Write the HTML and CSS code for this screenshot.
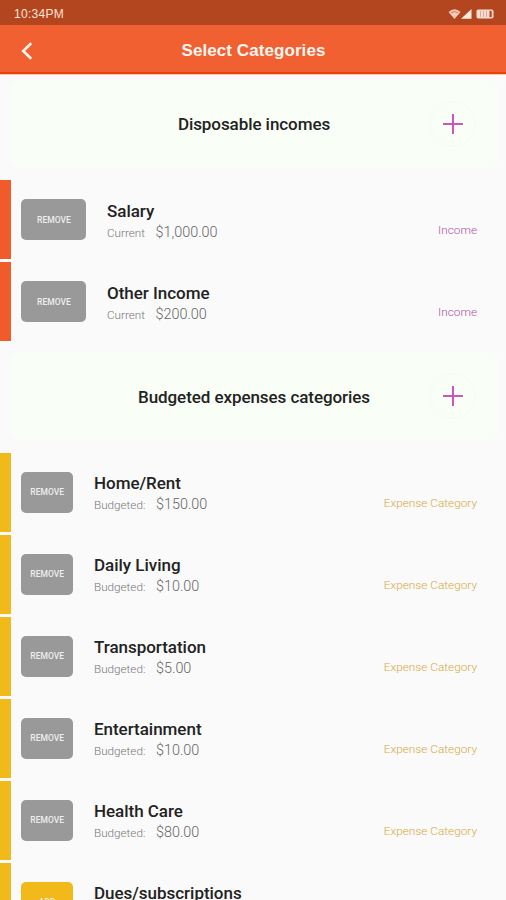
FILE: index.html
```html
<!DOCTYPE html>
<html lang="en">
<head>
<meta charset="utf-8">
<title>Select Categories</title>
<link rel="stylesheet" href="styles.css">
</head>
<body>
<div class="status">
  <span class="time">10:34PM</span>
  <svg class="indicators" width="48" height="12" viewBox="0 0 48 12">
    <path d="M.5 4Q6.500-1.600 12.500 4L6.500 11Z" fill="#f3c9b9"/>
    <path d="M3 4.800Q6.500 2.300 10 4.800" fill="none" stroke="#c4694a" stroke-width=".8"/>
    <path d="M13 10.800L23.500 1V10.800Z" fill="#fbe9e2"/>
    <rect x="28.500" y="1.500" width="17" height="9" rx="1.800" fill="#f8ddd3"/>
    <path d="M32.500 3v6M35.500 3v6M38.500 3v6" stroke="#d98f73" stroke-width=".7"/>
    <path d="M41.500 2.800h2.200v6.400h-2.200z" fill="#b4461f"/>
  </svg>
</div>
<header class="bar">
  <svg class="back" width="14" height="20" viewBox="0 0 14 20"><path d="M11.200 2.200L3.200 10L11.200 17.800" fill="none" stroke="#fff4ee" stroke-width="2.600"/></svg>
  <h1>Select Categories</h1>
</header>
<main>
  <section class="card first">
    <h2>Disposable incomes</h2>
    <button class="plus" aria-label="Add income"><svg width="20" height="20" viewBox="0 0 20 20"><path d="M0 10H20M10 0V20" stroke="#d055b8" stroke-width="2"/></svg></button>
  </section>
  <ul class="list income">
    <li><button class="action">REMOVE</button><div class="info"><h3>Salary</h3><p><span class="label">Current</span><span class="amount">$1,000.00</span></p></div><span class="kind">Income</span></li>
    <li><button class="action">REMOVE</button><div class="info"><h3>Other Income</h3><p><span class="label">Current</span><span class="amount">$200.00</span></p></div><span class="kind">Income</span></li>
  </ul>
  <section class="card">
    <h2>Budgeted expenses categories</h2>
    <button class="plus" aria-label="Add expense"><svg width="20" height="20" viewBox="0 0 20 20"><path d="M0 10H20M10 0V20" stroke="#d055b8" stroke-width="2"/></svg></button>
  </section>
  <ul class="list expense">
    <li><button class="action">REMOVE</button><div class="info"><h3>Home/Rent</h3><p><span class="label">Budgeted:</span><span class="amount">$150.00</span></p></div><span class="kind">Expense Category</span></li>
    <li><button class="action">REMOVE</button><div class="info"><h3>Daily Living</h3><p><span class="label">Budgeted:</span><span class="amount">$10.00</span></p></div><span class="kind">Expense Category</span></li>
    <li><button class="action">REMOVE</button><div class="info"><h3>Transportation</h3><p><span class="label">Budgeted:</span><span class="amount">$5.00</span></p></div><span class="kind">Expense Category</span></li>
    <li><button class="action">REMOVE</button><div class="info"><h3>Entertainment</h3><p><span class="label">Budgeted:</span><span class="amount">$10.00</span></p></div><span class="kind">Expense Category</span></li>
    <li><button class="action">REMOVE</button><div class="info"><h3>Health Care</h3><p><span class="label">Budgeted:</span><span class="amount">$80.00</span></p></div><span class="kind">Expense Category</span></li>
    <li><button class="action add">ADD</button><div class="info"><h3>Dues/subscriptions</h3></div></li>
  </ul>
</main>
</body>
</html>
```

FILE: styles.css
```css
* { box-sizing: border-box; margin: 0; padding: 0; }
body {
  height: 900px;
  overflow: hidden;
  display: flex;
  flex-direction: column;
  background: #fafafa;
  font-family: Roboto, "Liberation Sans", sans-serif;
}
button { border: 0; background: none; font-family: inherit; }
.status {
  flex: none;
  height: 25px;
  display: flex;
  justify-content: space-between;
  align-items: center;
  padding: 2px 10px 0 14px;
  background: #b4461f;
}
.time { font: 12px/14px "Liberation Sans", sans-serif; color: #fbe3d9; letter-spacing: .3px; }
.bar {
  flex: none;
  height: 49px;
  display: grid;
  grid-template-columns: 40px 1fr 40px;
  align-items: center;
  background: #f06030;
  border-bottom: 2px solid #e8430d;
  box-shadow: 0 1px 0 #fbc9b3;
}
.bar h1 {
  font: bold 17px/20px "Liberation Sans", sans-serif;
  letter-spacing: .07px;
  color: #fff6f1;
  text-align: center;
  padding: 5px 0 0 1px;
}
.back { margin: 4px 0 0 20px; }
main { flex: 1; min-height: 0; overflow: hidden; }
.card {
  height: 88px;
  margin: 11px 9px 13px 11px;
  display: grid;
  grid-template-columns: 1fr;
  align-items: center;
  border-radius: 8px;
  background: #f9fff6;
}
.card.first { margin-top: 6px; margin-bottom: 12px; }
.card h2 {
  grid-area: 1 / 1;
  text-align: center;
  font-size: 17px;
  line-height: 20px;
  font-weight: 500;
  letter-spacing: -.07px;
  padding-top: 1px;
  color: #222;
}
.card.first h2 { padding-top: 0; }
.card .plus {
  grid-area: 1 / 1;
  justify-self: end;
  width: 46px;
  height: 46px;
  margin-right: 21px;
  border: 1px solid #f6fbf3;
  border-radius: 50%;
  display: grid;
  place-items: center;
}
.list { list-style: none; display: flex; flex-direction: column; gap: 3px; }
.list li {
  height: 79px;
  display: flex;
  align-items: flex-start;
  padding: 19px 29px 0 10px;
  border-left: 11px solid #f15a29;
}
.expense li { border-left-color: #f2b91b; padding-top: 18.500px; }
.action {
  flex: none;
  width: 65px;
  height: 41px;
  margin-left: .4px;
  margin-right: 20.600px;
  border-radius: 5px;
  background: #999;
  color: #eee;
  font-size: 8.500px;
  font-weight: 500;
}
.expense .action { width: 51.600px; margin-right: 21px; }
.action.add { background: #f2b91b; }
.info { flex: 1; padding-top: 2px; }
.expense .info { padding-top: 1.500px; }
.info h3 { font-size: 17px; line-height: 20px; font-weight: 500; letter-spacing: -.03px; color: #222; }
.info p { display: flex; align-items: baseline; line-height: 20px; margin-top: 2px; }
.label { width: 48.500px; font-size: 11.700px; font-weight: 300; color: #777; }
.expense .label { width: 62px; }
.amount { font-size: 14.400px; font-weight: 300; color: #666; }
.kind { margin-top: 23px; font-size: 11.800px; line-height: 16px; font-weight: 300; color: #b04fa5; }
.expense .kind { color: #d9a83a; }
```
